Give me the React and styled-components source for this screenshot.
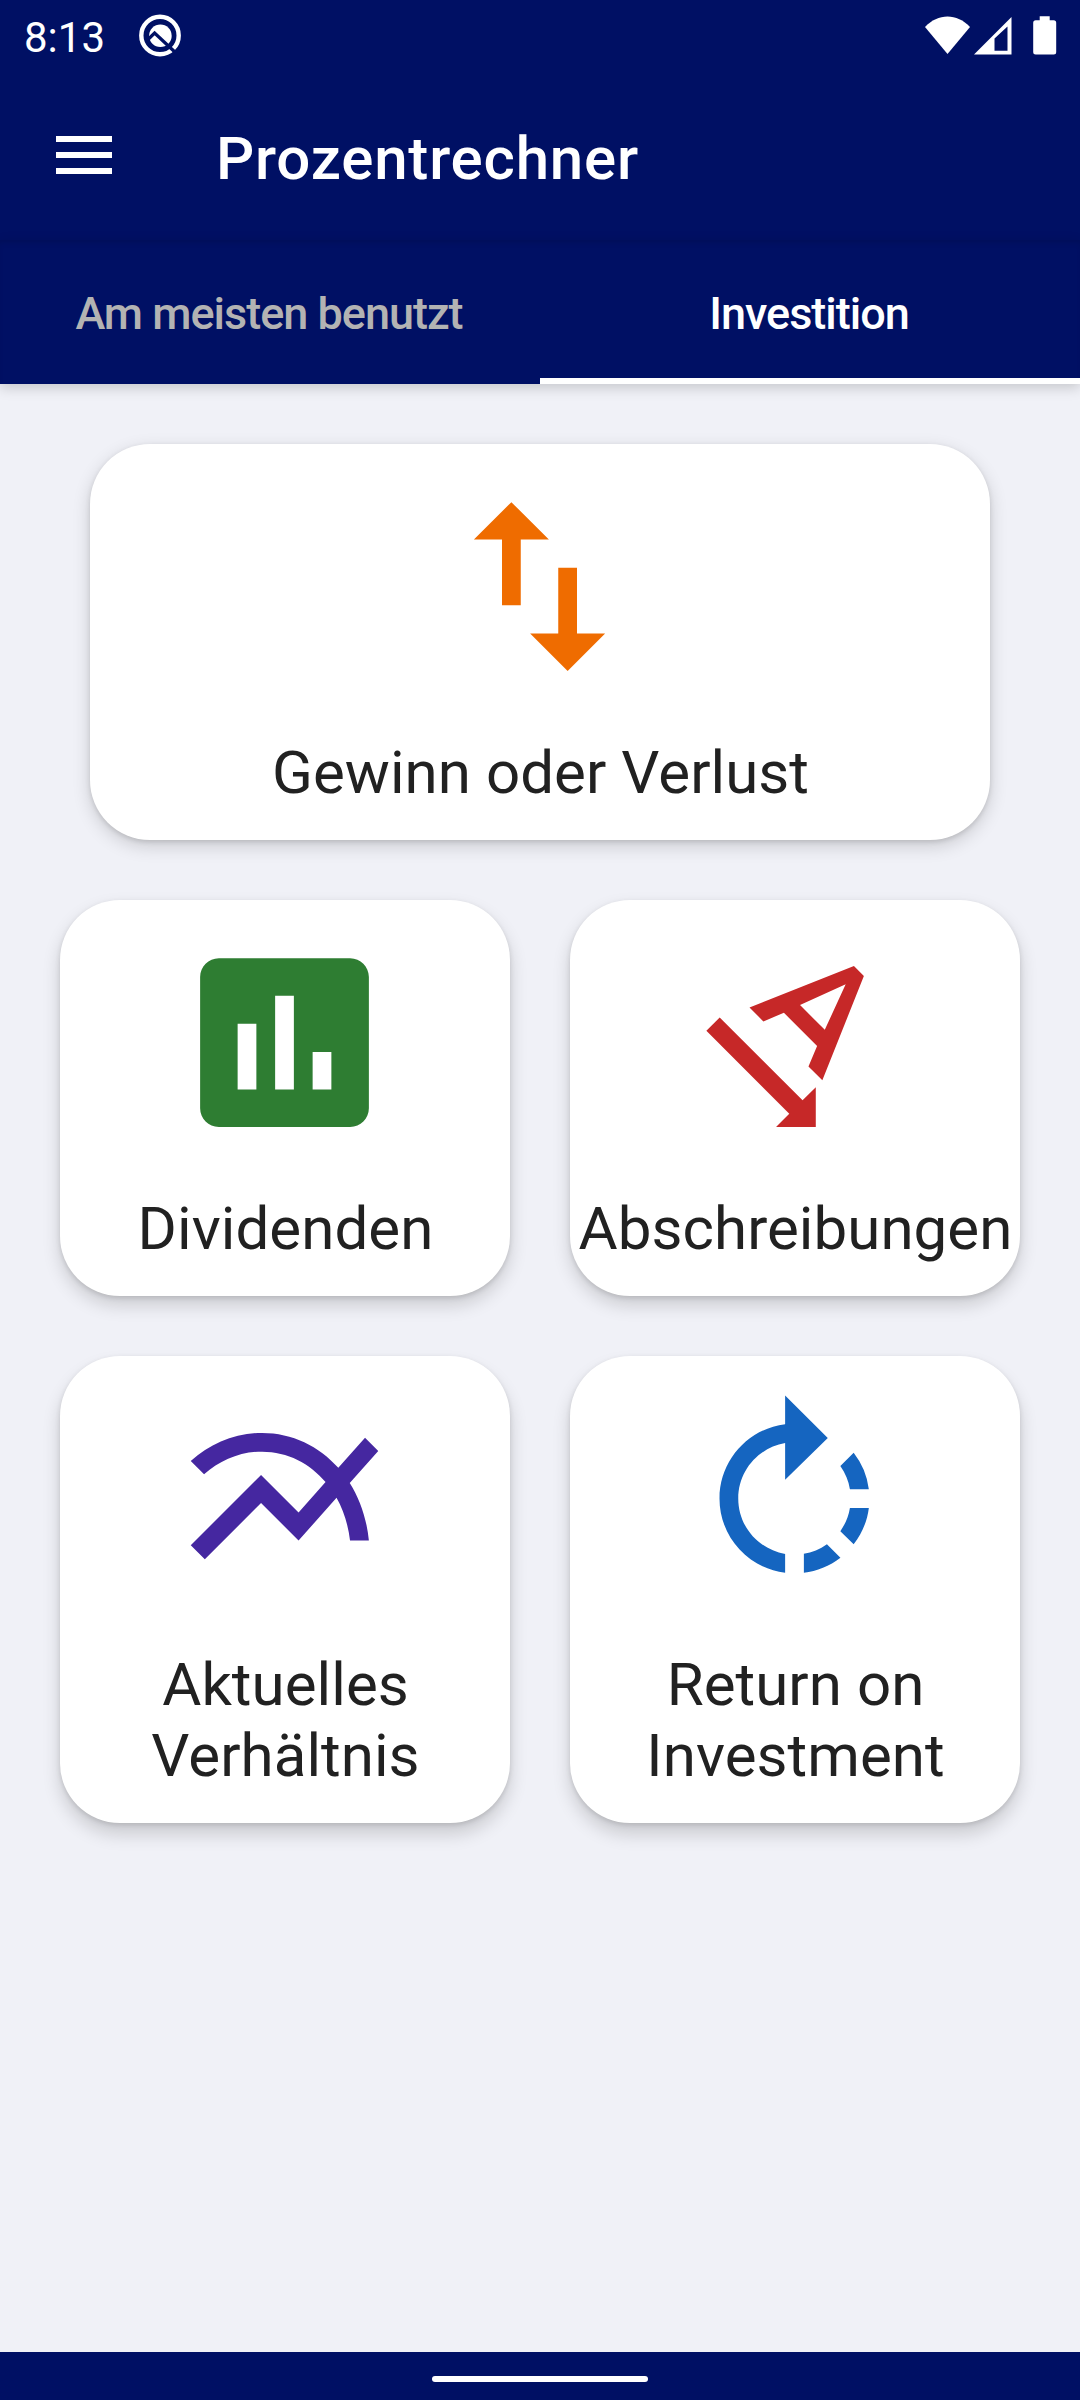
import React from 'react'
import styled, { createGlobalStyle } from 'styled-components'
import {
    MdSwapVert,
    MdAssessment,
    MdTextRotationAngledown,
    MdMultilineChart,
    MdRotateRight
} from 'react-icons/md'

const navy = '#001064'

const GlobalStyle = createGlobalStyle`
    body {
        margin: 0;
        background-color: #f0f1f7;
    }
`

const Screen = styled.div`
    display: flex;
    flex-direction: column;
    width: 1080px;
    height: 2400px;
    background-color: #f0f1f7;
    font-family: Roboto, sans-serif;
    overflow: hidden;
`

const StatusBar = styled.div`
    display: flex;
    align-items: center;
    box-sizing: border-box;
    height: 72px;
    padding: 0 24px;
    background-color: ${navy};
    color: white;
`

const Clock = styled.span`
    width: 114px;
    font-size: 42px;
    line-height: 50px;
    padding-top: 3px;
`

const StatusIcons = styled.div`
    display: flex;
    margin-left: auto;
    margin-right: -24px;
`

const Toolbar = styled.header`
    display: flex;
    align-items: center;
    box-sizing: border-box;
    height: 168px;
    padding-left: 56px;
    background-color: ${navy};
`

const MenuButton = styled.button`
    display: flex;
    flex-direction: column;
    gap: 10px;
    width: 56px;
    margin: 0 104px 2px 0;
    padding: 0;
    border: none;
    background: none;
    cursor: pointer;
`

const MenuLine = styled.span`
    height: 6px;
    width: 100%;
    background-color: white;
`

const Title = styled.h1`
    margin: 0;
    padding-top: 5px;
    color: white;
    font-size: 60px;
    font-weight: 500;
    line-height: 70px;
    letter-spacing: 0.8px;
`

const Tabs = styled.nav`
    display: flex;
    height: 144px;
    flex-shrink: 0;
    background-color: ${navy};
    box-shadow: inset 0 5px 6px -3px rgba(0, 0, 0, 0.13), 0 4px 12px rgba(0, 0, 0, 0.17);
`

const Tab = styled.button`
    flex: 1;
    box-sizing: border-box;
    padding: 8px 2px 0 0;
    border: none;
    border-bottom: 6px solid transparent;
    background: none;
    color: #b3b3b3;
    font-family: inherit;
    font-size: 45px;
    font-weight: 500;
    letter-spacing: -1px;
    cursor: pointer;
`

const TabActive = styled(Tab)`
    border-bottom-color: white;
    color: white
`

const Content = styled.main`
    flex: 1;
    display: grid;
    grid-template-columns: 450px 450px;
    align-content: start;
    gap: 60px;
    padding: 60px;
`

const Card = styled.div`
    display: flex;
    flex-direction: column;
    align-items: center;
    box-sizing: border-box;
    padding: 30px 0 32px;
    border-radius: 60px;
    background-color: white;
    box-shadow: 0 ${props => props.$depth}px 18px rgba(0, 0, 0, 0.16), 0 2px 5px rgba(0, 0, 0, 0.12);
    cursor: pointer;

    svg {
        width: 225px;
        height: 225px;
        margin-right: 1px;
        color: ${props => props.$color};
    }
`

const WideCard = styled(Card)`
    grid-column: 1 / 3;
    margin: 0 30px
`

const Label = styled.span`
    width: min-content;
    min-width: ${props => props.$wide ? '600px' : '0'};
    margin-top: 38px;
    padding-left: 1px;
    color: #212121;
    font-size: 60px;
    line-height: 71px;
    letter-spacing: 0.06px;
    text-align: center;
`

const TwoWords = styled(Label)`
    width: 330px
`

const NavBar = styled.footer`
    display: flex;
    align-items: center;
    justify-content: center;
    height: 48px;
    padding-top: 6px;
    box-sizing: border-box;
    background-color: ${navy};
`

const NavHandle = styled.div`
    width: 216px;
    height: 6px;
    border-radius: 3px;
    background-color: white;
`

const NoticeIcon = () => (
    <svg width="44" height="72" viewBox="138 0 44 72">
        <circle cx="160" cy="35.5" r="18.7" fill="none" stroke="white" strokeWidth="4.4" />
        <circle cx="160.4" cy="35.7" r="11.3" fill="white" />
        <path d="M148 39.500L154.600 33L177 54" fill="none" stroke={navy} strokeWidth="3.200" />
    </svg>
)

const SystemIcons = () => (
    <svg width="160" height="72" viewBox="920 0 160 72" fill="white">
        <path d="M925 27C938 13 957 13 970 27L947.500 54Z" />
        <path fillRule="evenodd" d="M974 54.500L1011.500 17V54.500ZM994.500 38.500V50.700H1007.500V26.500Z" />
        <path d="M1039.700 16.300h10v4h4q2.500 0 2.500 2.500v29.200q0 2.500 -2.500 2.500h-18q-2.500 0 -2.500 -2.500v-29.200q0 -2.500 2.500 -2.500h4z" />
    </svg>
)

const cards = [
    { label: 'Dividenden', Icon: MdAssessment, color: '#2e7d32', depth: 9 },
    { label: 'Abschreibungen', Icon: MdTextRotationAngledown, color: '#c62828', depth: 9 },
    { label: 'Aktuelles Verhältnis', Icon: MdMultilineChart, color: '#4527a0', depth: 11 },
    { label: 'Return on Investment', Icon: MdRotateRight, color: '#1565c0', depth: 11 }
]

const App = () => {
    return (
        <Screen>
            <GlobalStyle />
            <StatusBar>
                <Clock>8:13</Clock>
                <NoticeIcon />
                <StatusIcons>
                    <SystemIcons />
                </StatusIcons>
            </StatusBar>
            <Toolbar>
                <MenuButton aria-label="Menü">
                    <MenuLine />
                    <MenuLine />
                    <MenuLine />
                </MenuButton>
                <Title>Prozentrechner</Title>
            </Toolbar>
            <Tabs>
                <Tab>Am meisten benutzt</Tab>
                <TabActive>Investition</TabActive>
            </Tabs>
            <Content>
                <WideCard $color="#ef6c00" $depth={6}>
                    <MdSwapVert />
                    <Label $wide>Gewinn oder Verlust</Label>
                </WideCard>
                {
                    cards.map(({ label, Icon, color, depth }) => {
                        const Text = label.includes(' ') ? TwoWords : Label
                        return (
                            <Card key={label} $color={color} $depth={depth}>
                                <Icon />
                                <Text>{label}</Text>
                            </Card>
                        )
                    })
                }
            </Content>
            <NavBar>
                <NavHandle />
            </NavBar>
        </Screen>
    )
}

export default App
